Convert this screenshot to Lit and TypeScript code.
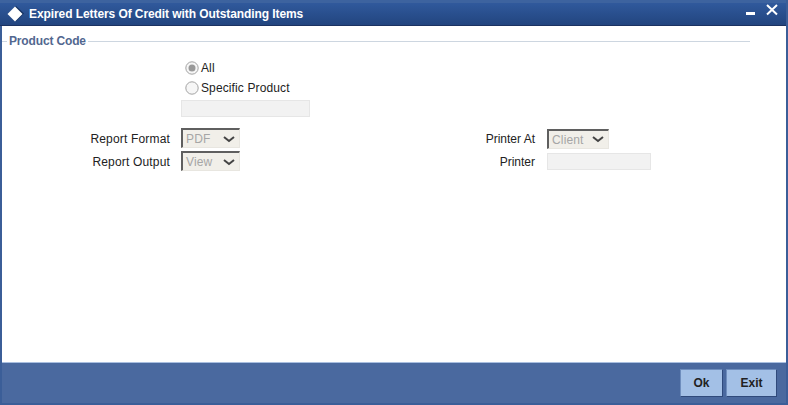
import { LitElement, html, css, svg } from "lit";
import { customElement } from "lit/decorators.js";

@customElement("app-root")
export class AppRoot extends LitElement {
  static styles = css`
    :host { display: flex; flex-direction: column; width: 788px; height: 405px; box-sizing: border-box; background: #3b5e98; font-family: "Liberation Sans", Arial, sans-serif; font-size: 12px; color: #222; overflow: hidden; padding-bottom: 2px; }
    .title { height: 26px; flex: none; display: flex; align-items: center; box-sizing: border-box; margin-right: 2px; border-top: 3px solid #3d639f; border-bottom: 1px solid #1b3261; background: linear-gradient(#30599c, #22457f); color: #fff; font-weight: bold; padding-left: 7px; gap: 5px; }
    .title .text { flex: 1; letter-spacing: -0.08px; }
    .ctl { display: flex; margin-right: 8px; align-self: flex-start; margin-top: 1px; gap: 10px; }
    .body { flex: 1; margin: 0 2px 0 2px; background: #fff; display: flex; flex-direction: column; padding-top: 7px; }
    .legend { display: flex; align-items: center; gap: 2px; color: #52678f; font-weight: bold; height: 16px; margin-right: 36px; letter-spacing: -0.15px; }
    .legend::before { content: ""; width: 5px; height: 1px; background: #cdd6e0; }
    .legend::after { content: ""; flex: 1; height: 1px; background: #cdd6e0; }
    .radios { display: flex; flex-direction: column; margin: 9px 0 0 183px; }
    .radio { display: flex; align-items: center; height: 20px; gap: 2px; letter-spacing: 0.12px; }
    .input { display: block; box-sizing: border-box; background: #f2f2f2; border: 1px solid #e6e6e6; height: 17px; }
    .wide { width: 129px; margin: 2px 0 0 -4px; }
    .grid { display: flex; margin-top: 11px; }
    .col { display: grid; grid-template-columns: var(--lw) auto; column-gap: 11px; row-gap: 3px; align-items: center; justify-items: end; justify-content: start; }
    .lbl { padding-top: 1px; letter-spacing: 0.17px; }
    .left { --lw: 168px; width: 414px; }
    .right { --lw: 119px; column-gap: 12px; }
    .right .lbl { letter-spacing: 0; }
    .sel { justify-self: start; box-sizing: border-box; display: flex; justify-content: space-between; align-items: center; height: 20px; background: #f1efe9; border: 1px solid #e8e6e0; border-left: 2px solid #5f5f5f; border-top: 2px solid #5f5f5f; color: #a6a6a6; padding: 1px 4px 0 3px; letter-spacing: 0.15px; }
    .s59 { width: 59px; }
    .s62 { width: 62px; }
    .printer { justify-self: start; width: 104px; }
    .footer { flex: none; height: 41px; box-sizing: border-box; margin: 0 2px 0 2px; border-top: 1px solid #a9bfe0; background: #4a699f; display: flex; justify-content: flex-end; align-items: flex-start; gap: 3px; padding: 6px 9px 0 0; }
    button { width: 43px; height: 28px; box-sizing: border-box; padding: 0; font: bold 12px "Liberation Sans", Arial, sans-serif; color: #222; background: #a3c0e6; border: 1px solid #6e8dbd; border-right-color: #2f4a7c; border-bottom-color: #2f4a7c; }
    button.exit { width: 51px; }
  `;

  private chev() {
    return html`<svg width="12" height="7" viewBox="0 0 12 7"><path d="M1 1l5 4 5-4" fill="none" stroke="#444" stroke-width="2"/></svg>`;
  }

  private radio(checked: boolean) {
    return html`<svg width="14" height="14" viewBox="0 0 14 14"><circle cx="7" cy="7" r="6.2" fill="#f6f6f6" stroke="#a3a3a3"/>${checked ? svg`<circle cx="7" cy="7" r="3.5" fill="#999"/>` : ""}</svg>`;
  }

  render() {
    return html`
      <div class="title">
        <svg width="17" height="16" viewBox="0 0 17 16"><path d="M9 0l8 7.5-8 8-8-8z" fill="#14305f"/><path d="M8 .5l7.5 7.5-7.5 7.5L.5 8z" fill="#fff"/></svg>
        <span class="text">Expired Letters Of Credit with Outstanding Items</span>
        <span class="ctl">
          <svg width="10" height="12" viewBox="0 0 10 12"><rect x="0" y="8" width="9" height="3" fill="#fff"/></svg>
          <svg width="12" height="12" viewBox="0 0 12 12"><path d="M1 1l10 9.500M11 1L1 10.500" stroke="#fff" stroke-width="2" fill="none"/></svg>
        </span>
      </div>
      <div class="body">
        <div class="legend">Product Code</div>
        <div class="radios">
          <label class="radio">${this.radio(true)}All</label>
          <label class="radio">${this.radio(false)}Specific Product</label>
          <span class="input wide"></span>
        </div>
        <div class="grid">
          <div class="col left">
            <span class="lbl">Report Format</span><span class="sel s59">PDF ${this.chev()}</span>
            <span class="lbl">Report Output</span><span class="sel s59">View ${this.chev()}</span>
          </div>
          <div class="col right">
            <span class="lbl">Printer At</span><span class="sel s62">Client ${this.chev()}</span>
            <span class="lbl">Printer</span><span class="input printer"></span>
          </div>
        </div>
      </div>
      <div class="footer">
        <button>Ok</button>
        <button class="exit">Exit</button>
      </div>
    `;
  }
}
